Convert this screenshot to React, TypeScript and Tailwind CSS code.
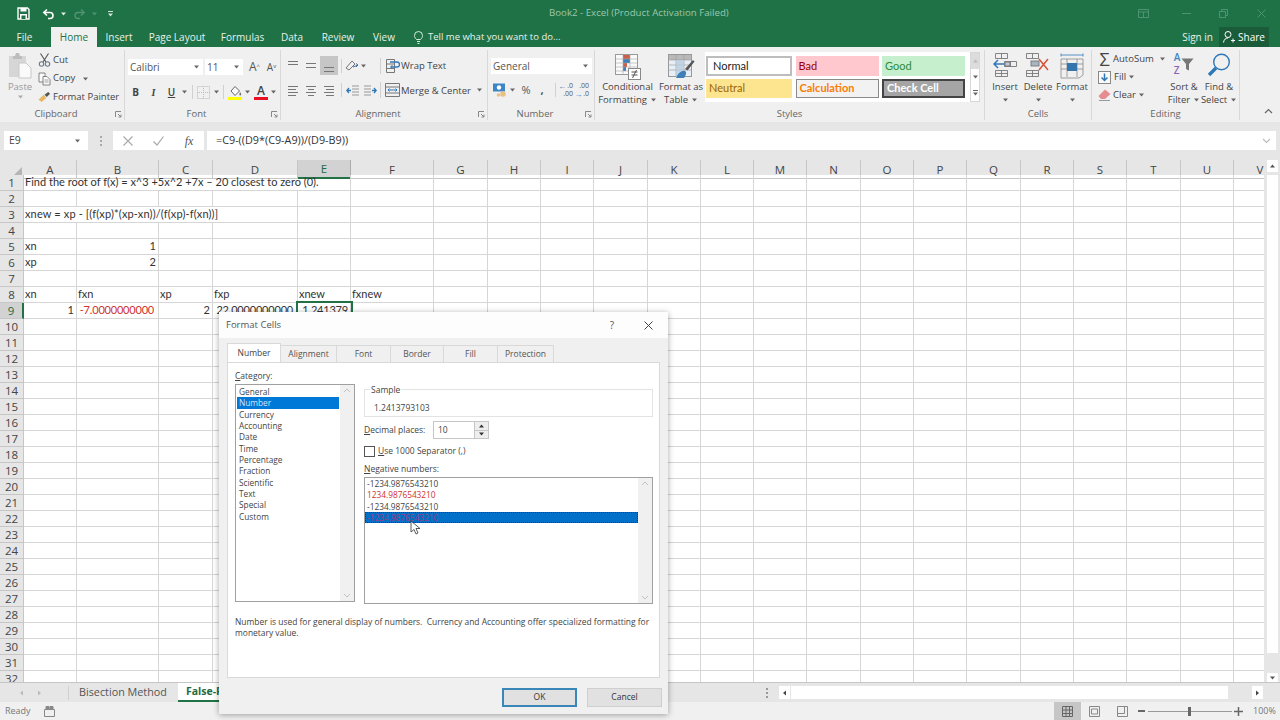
import type { ReactNode } from 'react'

const sheetCols =
  'grid grid-cols-[24px_53px_82px_54px_85px_53px_83px_54px_53px_53px_54px_53px_53px_53px_54px_53px_53px_54px_53px_53px_54px_53px_53px]'

const colNames = 'A B C D E F G H I J K L M N O P Q R S T U V'.split(' ')
const rowNums = Array.from({ length: 32 }, (_, i) => i + 1)

type Cell = { text: string; right?: boolean; red?: boolean; span?: string; cols?: number; selected?: boolean; tweak?: string }

const cells: Record<string, Cell> = {
  A1: { text: 'Find the root of f(x) = x^3 +5x^2 +7x – 20 closest to zero (0).', span: 'col-span-5', cols: 5 },
  A3: { text: 'xnew = xp - [(f(xp)*(xp-xn))/(f(xp)-f(xn))]', span: 'col-span-4', cols: 4, tweak: 'tracking-[0.14px]' },
  A5: { text: 'xn' },
  B5: { text: '1', right: true },
  A6: { text: 'xp' },
  B6: { text: '2', right: true },
  A8: { text: 'xn' },
  B8: { text: 'fxn' },
  C8: { text: 'xp' },
  D8: { text: 'fxp' },
  E8: { text: 'xnew' },
  F8: { text: 'fxnew' },
  A9: { text: '1', right: true },
  B9: { text: '-7.0000000000', right: true, red: true, tweak: 'tracking-[-0.2px] pr-[4px]' },
  C9: { text: '2', right: true },
  D9: { text: '22.0000000000', right: true, tweak: 'tracking-[-0.2px] pr-[4px]' },
  E9: { text: '1.241379', right: true, selected: true, tweak: 'tracking-[-0.2px]' },
}

function Caret({ className = 'text-[#666]' }: { className?: string }) {
  return (
    <svg width="7" height="4" viewBox="0 0 7 4" className={className}>
      <path d="M1 0.5h5L3.5 3.5z" fill="currentColor" />
    </svg>
  )
}

function Lines({ rows }: { rows: [number, number, number][] }) {
  return (
    <svg width="14" height="14" viewBox="0 0 14 14" stroke="#777" strokeWidth="1">
      {rows.map(([y, a, b]) => (
        <line key={y} x1={a} x2={b} y1={y + 0.5} y2={y + 0.5} />
      ))}
    </svg>
  )
}

function SaveIcon() {
  return (
    <svg width="13" height="13" viewBox="0 0 13 13">
      <path d="M1 1h9.500L12 2.500V12H1z" fill="#1f7246" stroke="#fff" strokeWidth="1.400" />
      <rect x="3.500" y="1" width="6" height="3.500" fill="#fff" />
      <rect x="3" y="7" width="7" height="5" fill="#fff" />
      <rect x="4.500" y="8.500" width="4" height="3.500" fill="#1f7246" />
    </svg>
  )
}

function UndoIcon({ color }: { color: string }) {
  return (
    <svg width="13" height="12" viewBox="0 0 13 12" fill="none" stroke={color} strokeWidth="1.6">
      <path d="M5 1.5 1.8 4.5 5 7.5" />
      <path d="M2 4.5h6a3 3 0 0 1 0 6H6" />
    </svg>
  )
}

function RedoIcon() {
  return (
    <svg width="13" height="12" viewBox="0 0 13 12" fill="none" stroke="#4f9470" strokeWidth="1.4">
      <path d="M8 1.5l3.2 3L8 7.5" />
      <path d="M11 4.5H5a3 3 0 0 0 0 6h2" />
    </svg>
  )
}

function PasteIcon() {
  return (
    <svg width="23" height="26" viewBox="0 0 23 26">
      <rect x="0" y="3" width="17" height="21" fill="#d6d6d6" />
      <path d="M4 3h2l1-3h3l1 3h2v3H4z" fill="#bdbdbd" />
      <path d="M10 10h7l5 5v10H10z" fill="#fafafa" stroke="#c8c8c8" />
    </svg>
  )
}

function CutIcon() {
  return (
    <svg width="13" height="14" viewBox="0 0 13 14" fill="none" stroke="#6b7a90" strokeWidth="1.1">
      <path d="M2.5 0.5 8 9M10.5 0.5 5 9" stroke="#555" />
      <circle cx="3.5" cy="11" r="2.2" />
      <circle cx="9.5" cy="11" r="2.2" />
    </svg>
  )
}

function CopyIcon() {
  return (
    <svg width="13" height="14" viewBox="0 0 13 14" fill="#fafafa" stroke="#777" strokeWidth="0.9">
      <path d="M1 1h6v9H1z" />
      <path d="M5 4.500h4l3 3V13H5z" />
      <path d="M6.500 8h4M6.500 10h4" stroke="#999" />
    </svg>
  )
}

function BrushIcon() {
  return (
    <svg width="14" height="12" viewBox="0 0 14 12">
      <path d="M0.500 9 6 3.500 9 7 4 11.500z" fill="#e8b765" />
      <path d="M7 3.500 11 0.500l2 2-3.500 3.500z" fill="#555" />
    </svg>
  )
}

function BorderIcon() {
  return (
    <svg width="13" height="13" viewBox="0 0 13 13" fill="none" stroke="#bbb" strokeDasharray="1 1">
      <rect x="0.500" y="0.500" width="12" height="12" />
      <path d="M6.500 0v13M0 6.500h13" />
    </svg>
  )
}

function FillIcon() {
  return (
    <svg width="14" height="15" viewBox="0 0 14 15">
      <path d="M3 6 7 1.500 11.500 6 7 10.500z" fill="#fafafa" stroke="#666" />
      <path d="M12 7c1 1.500 1.500 2 1 3-.5.800-1.500.500-1.700-.3z" fill="#666" />
      <rect x="0" y="12" width="14" height="3" fill="#ffff00" />
    </svg>
  )
}

function FontColorIcon() {
  return (
    <span className="flex flex-col items-center w-[14px] h-[15px] leading-[11px] text-[12px] font-semibold text-[#444]">
      A
      <span className="mt-[1px] w-[14px] h-[3px] bg-[#e81123]" />
    </span>
  )
}

function OrientIcon() {
  return (
    <svg width="14" height="13" viewBox="0 0 14 13" fill="none" stroke="#777">
      <path d="M1 9 7 2l3 3-6 6z" />
      <path d="M8 8l5-2" stroke="#3f6fa5" />
      <path d="M11 4.500 13 6l-2 2" stroke="#3f6fa5" />
    </svg>
  )
}

function WrapIcon() {
  return (
    <svg width="14" height="14" viewBox="0 0 14 14" fill="none" stroke="#777">
      <path d="M0.500 0.500h8v13h-8zM0.500 5h8M0.500 9.500h8" />
      <path d="M4 3h7a2 2 0 0 1 0 5H5" stroke="#2f78b7" strokeWidth="1.300" />
      <path d="M6.500 6 4.500 8l2 2" stroke="#2f78b7" />
    </svg>
  )
}

function MergeIcon() {
  return (
    <svg width="15" height="14" viewBox="0 0 15 14" fill="none" stroke="#777">
      <path d="M0.500 0.500h14v13H0.500zM0.500 4h14M0.500 10h14" />
      <path d="M3 7h9M4.500 5.500 3 7l1.500 1.500M10.500 5.500 12 7l-1.500 1.500" stroke="#2f78b7" />
    </svg>
  )
}

function IndentIcon({ flip }: { flip?: boolean }) {
  return (
    <svg width="13" height="13" viewBox="0 0 13 13" fill="none" className={flip ? '-scale-x-100' : ''}>
      <path d="M6 2h7M6 5h7M6 8h7M6 11h7" stroke="#999" />
      <path d="M5 6.500H1M3 4 .800 6.500 3 9" stroke="#2f78b7" strokeWidth="1.300" />
    </svg>
  )
}

function AccountingIcon() {
  return (
    <svg width="14" height="14" viewBox="0 0 14 14">
      <rect x="0" y="0.500" width="12" height="8" fill="#3c85c6" />
      <circle cx="6" cy="4.500" r="2.200" fill="#fff" />
      <circle cx="10" cy="11" r="2.800" fill="#e9c088" />
      <circle cx="5.500" cy="12" r="1.800" fill="#e9c088" />
    </svg>
  )
}

function DecimalIcon({ top, bottom, down }: { top: string; bottom: string; down?: boolean }) {
  return (
    <span className="flex flex-col items-end w-[16px] text-[7px] leading-[8px] text-[#555]">
      <span className="flex items-center gap-[1px]">
        {!down && <span className="text-[#2f78b7] text-[8px] leading-[8px]">←</span>}
        {top}
      </span>
      <span className="flex items-center gap-[1px]">
        {down && <span className="text-[#2f78b7] text-[8px] leading-[8px]">→</span>}
        {bottom}
      </span>
    </span>
  )
}

function ConditionalIcon() {
  return (
    <svg width="26" height="26" viewBox="0 0 26 26">
      <rect x="0.500" y="0.500" width="22" height="20" fill="#fafafa" stroke="#999" />
      <rect x="8" y="1" width="7" height="4" fill="#c9604b" />
      <rect x="8" y="5" width="7" height="4" fill="#3f7fb8" />
      <rect x="8" y="9" width="4" height="4" fill="#c9604b" />
      <rect x="8" y="13" width="3" height="4" fill="#3f7fb8" />
      <path d="M8 1v20M15 1v20M1 5h21M1 9h21M1 13h21M1 17h21" stroke="#aaa" strokeWidth="0.600" fill="none" />
      <rect x="13.500" y="14.500" width="12" height="11" fill="#fff" stroke="#888" />
      <path d="M16.500 18h6M16.500 21h6M21.500 16 17.500 24" stroke="#555" fill="none" />
    </svg>
  )
}

function FormatTableIcon() {
  return (
    <svg width="27" height="26" viewBox="0 0 27 26">
      <rect x="0.500" y="0.500" width="23" height="22" fill="#e8eef5" stroke="#999" />
      <rect x="1" y="1" width="22" height="5" fill="#b9b9b9" />
      <path d="M8 1v22M16 1v22M1 6h22M1 11h22M1 16h22" stroke="#999" strokeWidth="0.600" fill="none" />
      <path d="M8 6h8v17H8z" fill="#b8cde0" opacity="0.800" />
      <path d="M8 24c2-5 6-8 9-7 2 1 1 4-1 7z" fill="#3f7fb8" />
      <path d="M17 15 25 6l1.500 1.500-7 9z" fill="#555" />
    </svg>
  )
}

function InsertIcon() {
  return (
    <svg width="24" height="24" viewBox="0 0 24 24" fill="none" stroke="#777" strokeWidth="0.900">
      <path d="M2.500 0.500h12v5h-12zM8.500 0.500v5M2.500 17.500h12v6h-12zM2.500 20.500h12M8.500 17.500v6" />
      <path d="M11.500 8.500h12v5h-12zM17.500 8.500v5" />
      <rect x="12" y="9" width="5" height="4" fill="#bcc9d6" />
      <path d="M11 11H1M5 7 1 11l4 4" stroke="#2f78b7" strokeWidth="1.500" />
    </svg>
  )
}

function DeleteIcon() {
  return (
    <svg width="24" height="24" viewBox="0 0 24 24" fill="none" stroke="#777" strokeWidth="0.900">
      <path d="M0.500 0.500h12v5h-12zM6.500 0.500v5M0.500 17.500h12v6h-12zM0.500 20.500h12M6.500 17.500v6" />
      <rect x="5" y="8" width="8" height="5" fill="#a9b5c1" />
      <path d="M13 6l9 11M22 6l-9 11" stroke="#d6553a" strokeWidth="1.500" />
    </svg>
  )
}

function FormatIcon() {
  return (
    <svg width="24" height="26" viewBox="0 0 24 26" fill="none" stroke="#888" strokeWidth="0.800">
      <path d="M1 2h22M1 0.500v3M23 0.500v3" stroke="#2f78b7" />
      <path d="M1 6h22v16l-4 3H1zM1 11h22M1 16h22M7 6v18M17 6v18" />
      <rect x="7" y="10" width="10" height="8" fill="#3475ae" stroke="none" />
    </svg>
  )
}

function ClearIcon() {
  return (
    <svg width="13" height="12" viewBox="0 0 13 12">
      <path d="M0.500 7 7 0.500 12.500 5 7 10H3z" fill="#e58c90" />
      <path d="M1 11.500h11" stroke="#999" />
    </svg>
  )
}

function FillDownIcon() {
  return (
    <svg width="13" height="13" viewBox="0 0 13 13" fill="none">
      <rect x="0.500" y="0.500" width="12" height="12" stroke="#888" fill="#fafafa" />
      <path d="M6.500 2.500v7M3.500 6.500l3 3 3-3" stroke="#2f78b7" strokeWidth="1.500" />
    </svg>
  )
}

function SearchIcon() {
  return (
    <svg width="24" height="24" viewBox="0 0 24 24" fill="none" stroke="#2f78b7">
      <circle cx="14.500" cy="9" r="7.800" strokeWidth="1.400" />
      <path d="M9 15 2 22" strokeWidth="3.400" />
    </svg>
  )
}

function Launcher() {
  return (
    <svg width="7" height="7" viewBox="0 0 7 7" fill="none" stroke="#888">
      <path d="M0.500 6V0.500H6M3 3l3 3M6 3.500V6H3.500" />
    </svg>
  )
}

function Dropdown({ text, className }: { text: string; className: string }) {
  return (
    <div className={`flex items-center justify-between h-[16px] bg-white pl-[2px] pr-[3px] text-[10px] text-[#555] ${className}`}>
      {text}
      <Caret />
    </div>
  )
}

function Group({ width, label, launcher, children }: { width: string; label: string; launcher?: boolean; children: ReactNode }) {
  return (
    <div className={`flex flex-col flex-none h-[70px] border-r border-[#d8d8d8] ${width}`}>
      <div className="h-[58px] flex">{children}</div>
      <div className="flex items-center h-[12px] mt-[2px] text-[9.5px] text-[#666]">
        <span className="flex-1 text-center">{label}</span>
        {launcher && (
          <span className="flex justify-center w-[12px]">
            <Launcher />
          </span>
        )}
      </div>
    </div>
  )
}

function BigButton({ icon, lines, caretOnly, width }: { icon: ReactNode; lines: string[]; caretOnly?: boolean; width: string }) {
  return (
    <div className={`flex flex-col items-center flex-none text-[9.5px] leading-[13px] text-[#444] ${width}`}>
      <div className="flex items-end justify-center h-[30px]">{icon}</div>
      {lines.map((l, i) => (
        <div key={l} className="flex items-center gap-[3px] whitespace-nowrap">
          {l}
          {!caretOnly && i === lines.length - 1 && <Caret />}
        </div>
      ))}
      {caretOnly && (
        <div className="flex items-center h-[13px]">
          <Caret />
        </div>
      )}
    </div>
  )
}

function Divider({ className = 'h-[16px]' }: { className?: string }) {
  return <span className={`w-px bg-[#d0d0d0] flex-none ${className}`} />
}

function Slot({ width, className = '', children }: { width: string; className?: string; children: ReactNode }) {
  return <span className={`flex items-center justify-center flex-none ${width} ${className}`}>{children}</span>
}

function TitleBar() {
  return (
    <div className="flex items-center h-[27px] bg-[#1f7246] flex-none">
      <div className="flex items-center w-[549px] flex-none pl-[17px]">
        <SaveIcon />
        <span className="ml-[12px]">
          <UndoIcon color="#ffffff" />
        </span>
        <span className="ml-[5px]">
          <Caret className="text-[#dfeee6]" />
        </span>
        <span className="ml-[6px]">
          <RedoIcon />
        </span>
        <span className="ml-[5px]">
          <Caret className="text-[#4f9470]" />
        </span>
        <span className="flex flex-col items-center ml-[9px]">
          <span className="w-[5px] h-px bg-[#cfe3d8] mb-[1px]" />
          <Caret className="text-[#cfe3d8]" />
        </span>
      </div>
      <span className="text-[9.7px] text-[#9cc7ae]">Book2 - Excel (Product Activation Failed)</span>
      <div className="flex-1 flex items-center justify-end pr-[14px]">
        <svg width="11" height="9" viewBox="0 0 11 9" fill="none" stroke="#4f9470" className="mr-[33px]">
          <path d="M0.500 0.500h10v8h-10zM0.500 3h10M5.500 3v5.500" />
        </svg>
        <span className="w-[9px] h-px bg-[#4f9470] mr-[28px]" />
        <svg width="9" height="9" viewBox="0 0 9 9" fill="none" stroke="#4f9470" className="mr-[29px]">
          <path d="M0.500 2.500h6v6h-6zM2.500 2.500v-2h6v6h-2" />
        </svg>
        <svg width="9" height="9" viewBox="0 0 9 9" fill="none" stroke="#4f9470">
          <path d="M0.500 0.500l8 8M8.500 0.500l-8 8" />
        </svg>
      </div>
    </div>
  )
}

function TabRow() {
  const tabs: [string, string][] = [
    ['Insert', 'w-[44px]'],
    ['Page Layout', 'w-[72px]'],
    ['Formulas', 'w-[59px]'],
    ['Data', 'w-[40px]'],
    ['Review', 'w-[52px]'],
    ['View', 'w-[40px]'],
  ]
  return (
    <div className="flex items-center h-[20px] bg-[#1f7246] text-[10px] text-[#e6f1eb] flex-none">
      <span className="w-[49px] text-center">File</span>
      <span className="flex items-center justify-center w-[46px] ml-[2px] h-[20px] bg-[#f0f0f0] text-[#217346]">Home</span>
      {tabs.map(([t, w]) => (
        <span key={t} className={`text-center ${w}`}>
          {t}
        </span>
      ))}
      <svg width="9" height="13" viewBox="0 0 9 13" fill="none" stroke="#dbe9e1" className="ml-[10px] mr-[5px]">
        <path d="M2.500 8.500C1 7 .5 6 .5 4.500a4 4 0 0 1 8 0c0 1.500-.5 2.500-2 4zM3 10.500h3M3.500 12.500h2" />
      </svg>
      <span className="text-[9.5px]">Tell me what you want to do...</span>
      <span className="flex-1 text-right pr-[6px]">Sign in</span>
      <span className="flex items-center justify-center gap-[3px] w-[50px] h-[20px] bg-[#1a5c39] mr-[11px] text-white">
        <svg width="12" height="12" viewBox="0 0 12 12" fill="none" stroke="#fff">
          <circle cx="5" cy="3.500" r="3" />
          <path d="M0.500 11.500c.5-3 2-4.500 4.500-4.500M8 9.500h4M10 7.500v4" />
        </svg>
        Share
      </span>
    </div>
  )
}

function Ribbon() {
  return (
    <div className="flex h-[75px] pt-[3px] bg-[#f0f0f0] flex-none text-[#444]">
      <Group width="w-[125px]" label="Clipboard" launcher>
        <div className="flex flex-col items-center w-[30px] ml-[5px] pt-[3px] text-[9.5px] text-[#999] leading-[13px]">
          <PasteIcon />
          <span className="mt-[1px]">Paste</span>
          <span className="mt-[2px]">
            <Caret className="text-[#aaa]" />
          </span>
        </div>
        <div className="flex flex-col ml-[3px] pt-[1px] text-[9.5px]">
          <div className="flex items-center gap-[2px] h-[18px]">
            <Slot width="w-[13px]"><CutIcon /></Slot>
            Cut
          </div>
          <div className="flex items-center gap-[2px] h-[19px]">
            <Slot width="w-[13px]"><CopyIcon /></Slot>
            Copy
            <span className="ml-[5px]"><Caret /></span>
          </div>
          <div className="flex items-center gap-[2px] h-[18px] whitespace-nowrap">
            <Slot width="w-[13px]"><BrushIcon /></Slot>
            Format Painter
          </div>
        </div>
      </Group>

      <Group width="w-[156px]" label="Font" launcher>
        <div className="flex flex-col pl-[3px] pt-[8px]">
          <div className="flex items-center">
            <Dropdown text="Calibri" className="w-[75px]" />
            <Dropdown text="11" className="w-[38px] ml-[2px]" />
            <span className="ml-[3px] w-[17px] text-center text-[12px] text-[#555]">A<sup className="text-[6px]">^</sup></span>
            <span className="w-[17px] text-center text-[10px] text-[#555]">A<sup className="text-[6px]">v</sup></span>
          </div>
          <div className="flex items-center h-[16px] mt-[8px]">
            <Slot width="w-[15px]" className="text-[10px] font-bold text-[#444]">B</Slot>
            <Slot width="w-[21px]" className="text-[10px] italic font-semibold font-['Liberation_Serif',serif] text-[#444]">I</Slot>
            <Slot width="w-[15px]" className="text-[10px] font-semibold underline text-[#444]">U</Slot>
            <Slot width="w-[11px]"><Caret /></Slot>
            <Divider className="h-[14px] ml-[2px]" />
            <Slot width="w-[20px]"><BorderIcon /></Slot>
            <Slot width="w-[7px]"><Caret /></Slot>
            <Divider className="h-[14px] ml-[3px]" />
            <Slot width="w-[18px]" className="ml-[2px]"><FillIcon /></Slot>
            <Slot width="w-[7px]"><Caret /></Slot>
            <Slot width="w-[18px]" className="ml-[1px]"><FontColorIcon /></Slot>
            <Slot width="w-[7px]"><Caret /></Slot>
          </div>
        </div>
      </Group>

      <Group width="w-[207px]" label="Alignment" launcher>
        <div className="flex flex-col pl-[3px] pt-[6px]">
          <div className="flex items-center h-[19px]">
            <Slot width="w-[18px]"><Lines rows={[[2, 2, 12], [5, 2, 12]]} /></Slot>
            <Slot width="w-[18px]"><Lines rows={[[4, 2, 12], [8, 2, 12]]} /></Slot>
            <Slot width="w-[18px]" className="h-[19px] bg-[#c6c6c6]"><Lines rows={[[8, 2, 12], [12, 2, 12]]} /></Slot>
            <Divider className="h-[14px] ml-[3px]" />
            <Slot width="w-[14px]" className="ml-[3px]"><OrientIcon /></Slot>
            <Slot width="w-[8px]"><Caret /></Slot>
            <Divider className="h-[16px] ml-[13px]" />
            <Slot width="w-[15px]" className="ml-[4px]"><WrapIcon /></Slot>
            <span className="ml-[1px] mt-[2px] text-[9.5px] whitespace-nowrap">Wrap Text</span>
          </div>
          <div className="flex items-center h-[18px] mt-[6px]">
            <Slot width="w-[18px]"><Lines rows={[[3, 2, 12], [6, 2, 10], [9, 2, 12], [12, 2, 10]]} /></Slot>
            <Slot width="w-[18px]"><Lines rows={[[3, 2, 12], [6, 4, 10], [9, 2, 12], [12, 4, 10]]} /></Slot>
            <Slot width="w-[18px]"><Lines rows={[[3, 2, 12], [6, 4, 12], [9, 2, 12], [12, 4, 12]]} /></Slot>
            <Divider className="h-[14px] ml-[3px]" />
            <Slot width="w-[18px]" className="ml-[1px]"><IndentIcon /></Slot>
            <Slot width="w-[18px]"><IndentIcon flip /></Slot>
            <Divider className="h-[16px] ml-[1px]" />
            <Slot width="w-[15px]" className="ml-[4px]"><MergeIcon /></Slot>
            <span className="ml-[1px] mt-[2px] text-[9.5px] whitespace-nowrap">Merge &amp; Center</span>
            <span className="ml-[5px]"><Caret /></span>
          </div>
        </div>
      </Group>

      <Group width="w-[107px]" label="Number" launcher>
        <div className="flex flex-col pl-[3px] pt-[8px]">
          <Dropdown text="General" className="w-[101px]" />
          <div className="flex items-center h-[16px] mt-[8px]">
            <Slot width="w-[17px]"><AccountingIcon /></Slot>
            <Slot width="w-[9px]"><Caret /></Slot>
            <Slot width="w-[16px]" className="ml-[1px] text-[11px] text-[#555]">%</Slot>
            <Slot width="w-[16px]" className="text-[11px] font-bold text-[#555]">,</Slot>
            <Divider className="h-[14px] ml-[5px]" />
            <Slot width="w-[16px]" className="ml-[1px]"><DecimalIcon top=".0" bottom=".00" /></Slot>
            <Slot width="w-[16px]"><DecimalIcon top=".00" bottom=".0" down /></Slot>
          </div>
        </div>
      </Group>

      <Group width="w-[390px]" label="Styles">
        <div className="flex ml-[5px]">
          <BigButton width="w-[55px]" icon={<ConditionalIcon />} lines={['Conditional', 'Formatting']} />
          <BigButton width="w-[46px] ml-[3px]" icon={<FormatTableIcon />} lines={['Format as', 'Table']} />
          <div className="flex ml-[1px] mt-[2px] h-[50px]">
            <div className="grid grid-cols-[86px_83px_83px] gap-x-[3.500px] gap-y-[3px] content-center w-[265px] pl-[1px] bg-white font-['Lato',sans-serif] text-[11px]">
              <div className="flex items-center h-[20px] pl-[5px] border-2 border-[#bdbdbd] text-[#222]">Normal</div>
              <div className="flex items-center h-[20px] pl-[3px] bg-[#ffc7ce] text-[#9c0006]">Bad</div>
              <div className="flex items-center h-[20px] pl-[3px] bg-[#c6efce] text-[#2f8a3c]">Good</div>
              <div className="flex items-center h-[19px] pl-[3px] bg-[#fde48f] text-[#9c6500]">Neutral</div>
              <div className="flex items-center h-[19px] pl-[3px] bg-[#f2f2f2] border border-[#8a8a8a] font-bold text-[#fa7d00]">Calculation</div>
              <div className="flex items-center h-[19px] pl-[3px] bg-[#a5a5a5] border-2 border-[#444] font-bold text-white">Check Cell</div>
            </div>
            <div className="flex flex-col w-[10px] border border-[#d8d8d8]">
              <div className="flex items-center justify-center flex-1 bg-[#dcdcdc]"><Caret className="text-[#bbb] rotate-180" /></div>
              <div className="flex items-center justify-center flex-1 bg-white"><Caret /></div>
              <div className="flex flex-col items-center justify-center flex-1 bg-white">
                <span className="w-[5px] h-px bg-[#666] mb-[1px]" />
                <Caret />
              </div>
            </div>
          </div>
        </div>
      </Group>

      <Group width="w-[107px]" label="Cells">
        <div className="flex ml-[3px]">
          <BigButton width="w-[34px]" icon={<span className="mb-[3px]"><InsertIcon /></span>} lines={['Insert']} caretOnly />
          <BigButton width="w-[32px]" icon={<span className="mb-[3px]"><DeleteIcon /></span>} lines={['Delete']} caretOnly />
          <BigButton width="w-[36px]" icon={<span className="mb-[1px]"><FormatIcon /></span>} lines={['Format']} caretOnly />
        </div>
      </Group>

      <Group width="w-[148px]" label="Editing">
        <div className="flex flex-col w-[74px] pl-[6px] text-[9.5px] flex-none">
          <div className="flex items-center h-[18px] whitespace-nowrap">
            <Slot width="w-[13px]" className="text-[18px] leading-[18px] text-[#444]">Σ</Slot>
            <span className="ml-[2px]">AutoSum</span>
            <span className="ml-[5px]"><Caret /></span>
          </div>
          <div className="flex items-center h-[18px]">
            <FillDownIcon />
            <span className="ml-[3px]">Fill</span>
            <span className="ml-[2px]"><Caret /></span>
          </div>
          <div className="flex items-center h-[18px]">
            <ClearIcon />
            <span className="ml-[2px]">Clear</span>
            <span className="ml-[2px]"><Caret /></span>
          </div>
        </div>
        <BigButton
          width="w-[36px]"
          icon={
            <span className="flex items-center gap-[1px] mb-[3px]">
              <span className="flex flex-col text-[10px] leading-[13px] font-semibold">
                <span className="text-[#3f85c5]">A</span>
                <span className="text-[#8a63b5]">Z</span>
              </span>
              <svg width="13" height="13" viewBox="0 0 13 13">
                <path d="M0.500 0.500h12L8 6v6.500L5 11V6z" fill="#777" />
              </svg>
            </span>
          }
          lines={['Sort &', 'Filter']}
        />
        <BigButton width="w-[34px]" icon={<span className="mb-[3px]"><SearchIcon /></span>} lines={['Find &', 'Select']} />
      </Group>
      <div className="flex-1 flex items-end justify-end pr-[7px] pb-[6px] h-[70px]">
        <svg width="9" height="6" viewBox="0 0 9 6" fill="none" stroke="#666" strokeWidth="1.200">
          <path d="M1 5 4.500 1.500 8 5" />
        </svg>
      </div>
    </div>
  )
}

function FormulaBar() {
  return (
    <div className="flex-none h-[38px] bg-[#e6e6e6] pt-[9px]">
      <div className="flex items-center h-[19px]">
        <div className="flex items-center justify-between w-[84px] h-[19px] ml-[4px] pl-[5px] pr-[7px] bg-white text-[10.5px] text-[#444]">
          E9
          <Caret />
        </div>
        <span className="flex flex-col gap-[2px] ml-[12px] w-[2px]">
          <span className="w-[2px] h-[2px] bg-[#aaa]" />
          <span className="w-[2px] h-[2px] bg-[#aaa]" />
          <span className="w-[2px] h-[2px] bg-[#aaa]" />
        </span>
        <div className="flex items-center w-[91px] h-[19px] ml-[11px] bg-white">
          <Slot width="w-[30px]">
            <svg width="10" height="10" viewBox="0 0 10 10" fill="none" stroke="#aaa" strokeWidth="1.200"><path d="M0.500 0.500l9 9M9.500 0.500l-9 9" /></svg>
          </Slot>
          <Slot width="w-[31px]">
            <svg width="11" height="10" viewBox="0 0 11 10" fill="none" stroke="#aaa" strokeWidth="1.200"><path d="M0.500 5.500l3.500 3.500 6.500-8.500" /></svg>
          </Slot>
          <Slot width="w-[30px]" className="font-['Liberation_Serif',serif] italic text-[12px] text-[#555]">fx</Slot>
        </div>
        <div className="flex items-center justify-between w-[1069px] h-[19px] ml-[3px] pl-[9px] pr-[5px] bg-white text-[10.8px] text-[#333]">
          =C9-((D9*(C9-A9))/(D9-B9))
          <svg width="9" height="6" viewBox="0 0 9 6" fill="none" stroke="#bbb" strokeWidth="1.200"><path d="M1 1l3.500 3.500L8 1" /></svg>
        </div>
      </div>
    </div>
  )
}

function Sheet() {
  return (
    <div className="flex h-[522px] flex-none">
      <div className="w-[1264px] flex-none overflow-hidden bg-white">
        <div className={`${sheetCols} h-[15px] bg-[#e6e6e6] text-[11.5px] text-[#444]`}>
          <div className="flex items-end justify-end pr-[2px] pb-[2px] border-b border-[#ababab]">
            <span className="w-0 h-0 border-l-[9px] border-l-transparent border-b-[9px] border-b-[#b5b5b5]" />
          </div>
          {colNames.map(c => (
            <div
              key={c}
              className={
                c === 'E'
                  ? 'flex items-center justify-center border-r border-b-2 border-r-[#ababab] border-b-[#217346] bg-[#d2d2d2] text-[#1f6b41]'
                  : 'flex items-center justify-center border-r border-b border-[#c6c6c6]'
              }
            >
              {c}
            </div>
          ))}
        </div>
        <div className={`${sheetCols} auto-rows-[16px] font-['Lato',sans-serif] text-[11px] text-[#333]`}>
          {rowNums.map(r => (
            <Row key={r} row={r} />
          ))}
        </div>
      </div>
      <div className="flex flex-col items-center w-[16px] flex-none bg-[#e6e6e6]">
        <div className="flex items-center justify-center w-[11px] h-[12px] bg-white">
          <Caret className="text-[#555] rotate-180" />
        </div>
        <div className="w-[11px] h-[478px] mt-[3px] bg-white" />
        <div className="flex-1" />
        <div className="flex items-center justify-center w-[11px] h-[9px] bg-white">
          <Caret className="text-[#555]" />
        </div>
      </div>
    </div>
  )
}

function Row({ row }: { row: number }) {
  const out: ReactNode[] = [
    <div
      key="h"
      className={
        row === 9
          ? "flex items-center justify-center bg-[#d2d2d2] border-r-2 border-b border-r-[#217346] border-b-[#c6c6c6] font-['Open_Sans',sans-serif] text-[11.5px] text-[#1f6b41]"
          : "flex items-center justify-center bg-[#e6e6e6] border-r border-b border-[#c6c6c6] font-['Open_Sans',sans-serif] text-[11.5px] text-[#444]"
      }
    >
      {row}
    </div>,
  ]
  let skip = 0
  colNames.forEach(c => {
    if (skip > 0) {
      skip--
      return
    }
    const cell = cells[`${c}${row}`]
    if (cell?.cols) skip = cell.cols - 1
    const base = 'flex items-center pl-[1px] pr-[2px] whitespace-nowrap overflow-hidden border-r border-b border-[#d6d6d6]'
    out.push(
      <div
        key={c}
        className={[
          base,
          cell?.span ?? '',
          cell?.tweak ?? '',
          cell?.right ? 'justify-end' : '',
          cell?.red ? 'text-[#d0312d]' : '',
          cell?.selected ? 'relative z-10 outline-2 outline-[#217346]' : '',
        ].join(' ')}
      >
        {cell?.text}
      </div>,
    )
  })
  return <>{out}</>
}

function SheetTabs() {
  return (
    <div className="flex items-center h-[20px] flex-none bg-[#e6e6e6] border-t border-[#c6c6c6]">
      <Slot width="w-[10px]" className="ml-[16px]"><Caret className="text-[#bbb] rotate-90" /></Slot>
      <Slot width="w-[10px]" className="ml-[8px]"><Caret className="text-[#bbb] -rotate-90" /></Slot>
      <Divider className="h-[14px] ml-[24px]" />
      <span className="ml-[10px] w-[99px] text-[10.8px] text-[#555] whitespace-nowrap">Bisection Method</span>
      <span className="flex items-center w-[60px] h-[19px] pl-[8px] bg-white border-b-2 border-[#217346] text-[10.5px] font-bold text-[#1f6b41] whitespace-nowrap overflow-hidden">
        False-Position
      </span>
      <span className="flex flex-col gap-[2px] ml-[528px] w-[2px]">
        <span className="w-[2px] h-[2px] bg-[#999]" />
        <span className="w-[2px] h-[2px] bg-[#999]" />
        <span className="w-[2px] h-[2px] bg-[#999]" />
      </span>
      <div className="flex items-center h-[13px] ml-[11px]">
        <Slot width="w-[11px]" className="h-[13px] bg-white"><Caret className="text-[#444] rotate-90" /></Slot>
        <span className="w-[437px] h-[13px] ml-[1px] bg-white" />
        <span className="w-[24px]" />
        <Slot width="w-[11px]" className="h-[13px] bg-white"><Caret className="text-[#444] -rotate-90" /></Slot>
      </div>
    </div>
  )
}

function StatusBar() {
  return (
    <div className="flex items-center h-[18px] flex-none bg-[#f0f0f0] text-[9px] text-[#777]">
      <span className="ml-[5px]">Ready</span>
      <svg width="11" height="11" viewBox="0 0 11 11" fill="none" stroke="#888" className="ml-[13px]">
        <path d="M0.500 3.500h10v7h-10z" />
        <path d="M2 0.500h3v3H2zM6 0.500h3v3H6z" fill="#888" />
      </svg>
      <div className="flex-1" />
      <Slot width="w-[27px]" className="h-[18px] bg-[#c6c6c6]">
        <svg width="11" height="11" viewBox="0 0 11 11" fill="none" stroke="#666"><path d="M0.500 0.500h10v10h-10zM0.500 4h10M0.500 7.500h10M4 .5v10M7.500 .5v10" /></svg>
      </Slot>
      <Slot width="w-[27px]">
        <svg width="11" height="11" viewBox="0 0 11 11" fill="none" stroke="#888"><path d="M0.500 0.500h10v10h-10zM2.500 3h6v5h-6z" /></svg>
      </Slot>
      <Slot width="w-[29px]">
        <svg width="11" height="11" viewBox="0 0 11 11" fill="none" stroke="#888"><path d="M0.500 0.500h10v10h-10zM0.500 7.500h7v-7" /></svg>
      </Slot>
      <span className="w-[7px] h-[2px] ml-[1px] bg-[#666]" />
      <div className="flex items-center w-[84px] h-px ml-[3px] bg-[#999]">
        <span className="w-[3px] h-[9px] ml-[40px] bg-[#666]" />
      </div>
      <svg width="9" height="9" viewBox="0 0 9 9" stroke="#666" strokeWidth="1.500" className="ml-[2px]">
        <path d="M0 4.500h9M4.500 0v9" />
      </svg>
      <span className="ml-[10px] mr-[3px] w-[24px]">100%</span>
    </div>
  )
}

function Dialog() {
  const categories = ['General', 'Number', 'Currency', 'Accounting', 'Date', 'Time', 'Percentage', 'Fraction', 'Scientific', 'Text', 'Special', 'Custom']
  const tabs: [string, string][] = [
    ['Alignment', 'w-[56px]'],
    ['Font', 'w-[54px]'],
    ['Border', 'w-[53px]'],
    ['Fill', 'w-[54px]'],
    ['Protection', 'w-[56px]'],
  ]
  return (
    <div className="absolute left-[219px] top-[312px] z-20 flex flex-col w-[449px] h-[402px] bg-[#f0f0f0] shadow-[0_1px_6px_rgba(0,0,0,0.35)] text-[8.5px] text-[#444]">
      <div className="flex items-center justify-between h-[26px] pl-[7px] pr-[15px] bg-[#fdfdfd] flex-none">
        <span className="text-[9.5px] text-[#555]">Format Cells</span>
        <div className="flex items-center gap-[30px]">
          <span className="text-[10px] text-[#555]">?</span>
          <svg width="9" height="9" viewBox="0 0 9 9" fill="none" stroke="#444"><path d="M0.500 0.500l8 8M8.500 0.500l-8 8" /></svg>
        </div>
      </div>
      <div className="flex items-end h-[24px] px-[8px] flex-none">
        <span className="flex items-center justify-center w-[54px] h-[19px] bg-white border-x border-t border-[#d9d9d9]">Number</span>
        {tabs.map(([t, w]) => (
          <span key={t} className={`flex items-center justify-center h-[17px] bg-[#f0f0f0] border-r border-t border-[#d9d9d9] text-[#555] ${w}`}>
            {t}
          </span>
        ))}
      </div>
      <div className="flex flex-col h-[316px] mx-[8px] pl-[7px] pt-[7px] bg-white border border-[#d9d9d9] flex-none">
        <div className="flex h-[237px]">
          <div className="flex flex-col w-[120px] flex-none">
            <div className="h-[14px] leading-[12px]"><u>C</u>ategory:</div>
            <div className="flex h-[218px] border border-[#a0a0a0]">
              <div className="flex flex-col flex-1 px-[1px] pt-[1px] text-[8.3px] leading-[11.33px]">
                {categories.map(c => (
                  <div key={c} className={c === 'Number' ? 'h-[11.330px] px-[2px] bg-[#0078d7] text-[#cfe6fa]' : 'h-[11.330px] px-[2px]'}>
                    {c}
                  </div>
                ))}
              </div>
              <div className="flex flex-col items-center justify-between w-[14px] py-[3px] bg-[#f0f0f0]">
                <svg width="8" height="5" viewBox="0 0 8 5" fill="none" stroke="#c0c0c0"><path d="M1 4l3-3 3 3" /></svg>
                <svg width="8" height="5" viewBox="0 0 8 5" fill="none" stroke="#c0c0c0"><path d="M1 1l3 3 3-3" /></svg>
              </div>
            </div>
          </div>
          <div className="flex flex-col w-[289px] ml-[9px] flex-none">
            <div className="relative h-[28px] mt-[19px] pl-[9px] pt-[12px] leading-[12px] border border-[#e3e3e3]">
              <span className="absolute -top-[6px] left-[5px] px-[1px] bg-white">Sample</span>
              1.2413793103
            </div>
            <div className="flex items-center h-[18px] mt-[4px]">
              <span className="w-[69px]"><u>D</u>ecimal places:</span>
              <span className="flex items-center w-[42px] h-[18px] pl-[4px] border border-[#c6c6c6]">10</span>
              <span className="flex flex-col w-[14px] h-[18px] border-y border-r border-[#c6c6c6]">
                <span className="flex items-center justify-center flex-1 bg-[#eeeeee] border-b border-[#c6c6c6]"><Caret className="text-[#333] rotate-180" /></span>
                <span className="flex items-center justify-center flex-1 bg-[#eeeeee]"><Caret className="text-[#333]" /></span>
              </span>
            </div>
            <div className="flex items-center h-[11px] mt-[7px]">
              <span className="w-[11px] h-[11px] border border-[#555] bg-white" />
              <span className="ml-[3px]"><u>U</u>se 1000 Separator (,)</span>
            </div>
            <div className="h-[12px] mt-[6px] leading-[12px]"><u>N</u>egative numbers:</div>
            <div className="flex h-[127px] mt-[2px] border border-[#a0a0a0]">
              <div className="flex flex-col flex-1 text-[8.3px] leading-[12.5px]">
                <div className="h-[11.330px] pl-[2px]">-1234.9876543210</div>
                <div className="h-[11.330px] pl-[2px] text-[#d0312d]">1234.9876543210</div>
                <div className="h-[11.330px] pl-[2px]">-1234.9876543210</div>
                <div className="h-[11.330px] pl-[2px] bg-[#0070c8] text-[#a33a7c] outline-1 -outline-offset-1 outline-dotted outline-[#0a3d66]">-1234.9876543210</div>
              </div>
              <div className="flex flex-col items-center justify-between w-[14px] py-[3px] bg-[#f0f0f0]">
                <svg width="8" height="5" viewBox="0 0 8 5" fill="none" stroke="#c0c0c0"><path d="M1 4l3-3 3 3" /></svg>
                <svg width="8" height="5" viewBox="0 0 8 5" fill="none" stroke="#c0c0c0"><path d="M1 1l3 3 3-3" /></svg>
              </div>
            </div>
          </div>
        </div>
        <p className="mt-[9px] pr-[5px] text-[8.45px] leading-[11px] whitespace-pre-wrap">
          {'Number is used for general display of numbers.  Currency and Accounting offer specialized formatting for\nmonetary value.'}
        </p>
      </div>
      <div className="flex items-center justify-end flex-1 pr-[6px] pt-[3px]">
        <button className="w-[75px] h-[19px] bg-[#e1e1e1] border-2 border-[#3a86b8] text-[#333]">OK</button>
        <button className="w-[75px] h-[19px] ml-[10px] bg-[#e1e1e1] border border-[#cfcfcf] text-[#333]">Cancel</button>
      </div>
    </div>
  )
}

export default function App() {
  return (
    <div className="relative flex flex-col w-[1280px] h-[720px] overflow-hidden bg-white font-['Open_Sans',sans-serif]">
      <TitleBar />
      <TabRow />
      <Ribbon />
      <FormulaBar />
      <Sheet />
      <SheetTabs />
      <StatusBar />
      <Dialog />
      <svg width="11" height="15" viewBox="0 0 11 15" className="absolute left-[410px] top-[520px] z-30">
        <path d="M1 1v11l3-2.500 2 4.500 2-1-2-4.500h4z" fill="#fff" stroke="#333" strokeWidth="0.800" />
      </svg>
    </div>
  )
}
